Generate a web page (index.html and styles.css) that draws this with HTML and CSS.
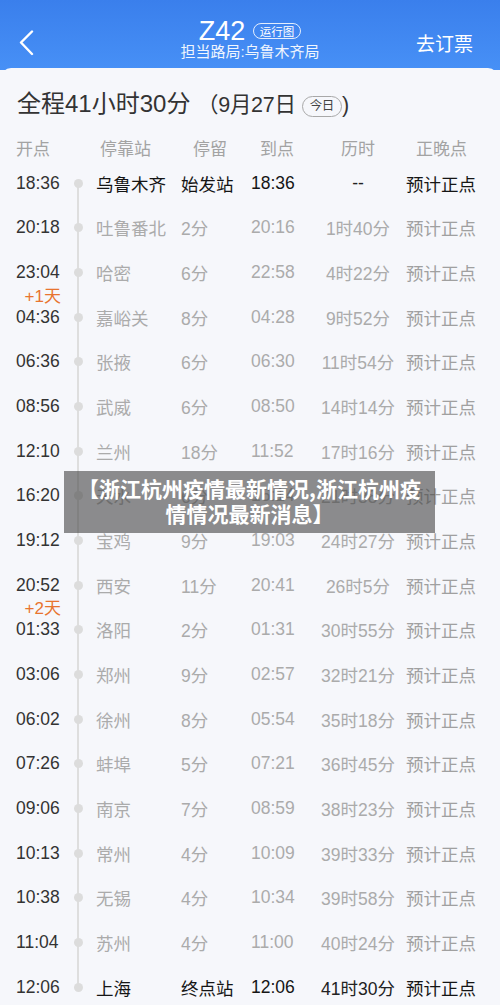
FILE: index.html
```html
<!DOCTYPE html>
<html lang="zh-CN">
<head>
    <meta charset="UTF-8">
    <meta name="viewport" content="width=device-width, initial-scale=1.0">
    <title>Z42 时刻表</title>
    <link rel="stylesheet" href="styles.css">
</head>
<body>
    <div class="topbar">
        <div class="back">
            <svg width="16" height="26" viewBox="0 0 16 26"><polyline points="13,1.5 2,12.5 13,24" fill="none" stroke="#fff" stroke-width="2.4" stroke-linecap="round" stroke-linejoin="round"/></svg>
        </div>
        <div class="title">
            <div class="train">Z42 <span class="chart">运行图</span></div>
            <div class="bureau">担当路局:乌鲁木齐局</div>
        </div>
        <div class="order">去订票</div>
    </div>

    <div class="card">
        <div class="summary">
            全程41小时30分 <span class="date">（9月27日<span class="today">今日</span>)</span>
        </div>

        <div class="grid head">
            <div class="h-time">开点</div>
            <div></div>
            <div class="h-station">停靠站</div>
            <div class="h-stay">停留</div>
            <div class="h-arrive">到点</div>
            <div class="h-dur">历时</div>
            <div class="h-status">正晚点</div>
        </div>

        <div class="timetable">
            <div class="grid row dark first">
                <div class="time">18:36</div><div class="dot"></div>
                <div class="station">乌鲁木齐</div><div class="stay">始发站</div>
                <div class="arrive">18:36</div><div class="dur">--</div><div class="status">预计正点</div>
            </div>
            <div class="grid row">
                <div class="time">20:18</div><div class="dot"></div>
                <div class="station">吐鲁番北</div><div class="stay">2分</div>
                <div class="arrive">20:16</div><div class="dur">1时40分</div><div class="status">预计正点</div>
            </div>
            <div class="grid row">
                <div class="time">23:04</div><div class="dot"></div>
                <div class="station">哈密</div><div class="stay">6分</div>
                <div class="arrive">22:58</div><div class="dur">4时22分</div><div class="status">预计正点</div>
            </div>
            <div class="grid row">
                <div class="time"><span class="plus">+1天</span>04:36</div><div class="dot"></div>
                <div class="station">嘉峪关</div><div class="stay">8分</div>
                <div class="arrive">04:28</div><div class="dur">9时52分</div><div class="status">预计正点</div>
            </div>
            <div class="grid row">
                <div class="time">06:36</div><div class="dot"></div>
                <div class="station">张掖</div><div class="stay">6分</div>
                <div class="arrive">06:30</div><div class="dur">11时54分</div><div class="status">预计正点</div>
            </div>
            <div class="grid row">
                <div class="time">08:56</div><div class="dot"></div>
                <div class="station">武威</div><div class="stay">6分</div>
                <div class="arrive">08:50</div><div class="dur">14时14分</div><div class="status">预计正点</div>
            </div>
            <div class="grid row">
                <div class="time">12:10</div><div class="dot"></div>
                <div class="station">兰州</div><div class="stay">18分</div>
                <div class="arrive">11:52</div><div class="dur">17时16分</div><div class="status">预计正点</div>
            </div>
            <div class="grid row">
                <div class="time">16:20</div><div class="dot"></div>
                <div class="station">天水</div><div class="stay">6分</div>
                <div class="arrive">16:14</div><div class="dur">21时38分</div><div class="status">预计正点</div>
            </div>
            <div class="grid row">
                <div class="time">19:12</div><div class="dot"></div>
                <div class="station">宝鸡</div><div class="stay">9分</div>
                <div class="arrive">19:03</div><div class="dur">24时27分</div><div class="status">预计正点</div>
            </div>
            <div class="grid row">
                <div class="time">20:52</div><div class="dot"></div>
                <div class="station">西安</div><div class="stay">11分</div>
                <div class="arrive">20:41</div><div class="dur">26时5分</div><div class="status">预计正点</div>
            </div>
            <div class="grid row">
                <div class="time"><span class="plus">+2天</span>01:33</div><div class="dot"></div>
                <div class="station">洛阳</div><div class="stay">2分</div>
                <div class="arrive">01:31</div><div class="dur">30时55分</div><div class="status">预计正点</div>
            </div>
            <div class="grid row">
                <div class="time">03:06</div><div class="dot"></div>
                <div class="station">郑州</div><div class="stay">9分</div>
                <div class="arrive">02:57</div><div class="dur">32时21分</div><div class="status">预计正点</div>
            </div>
            <div class="grid row">
                <div class="time">06:02</div><div class="dot"></div>
                <div class="station">徐州</div><div class="stay">8分</div>
                <div class="arrive">05:54</div><div class="dur">35时18分</div><div class="status">预计正点</div>
            </div>
            <div class="grid row">
                <div class="time">07:26</div><div class="dot"></div>
                <div class="station">蚌埠</div><div class="stay">5分</div>
                <div class="arrive">07:21</div><div class="dur">36时45分</div><div class="status">预计正点</div>
            </div>
            <div class="grid row">
                <div class="time">09:06</div><div class="dot"></div>
                <div class="station">南京</div><div class="stay">7分</div>
                <div class="arrive">08:59</div><div class="dur">38时23分</div><div class="status">预计正点</div>
            </div>
            <div class="grid row">
                <div class="time">10:13</div><div class="dot"></div>
                <div class="station">常州</div><div class="stay">4分</div>
                <div class="arrive">10:09</div><div class="dur">39时33分</div><div class="status">预计正点</div>
            </div>
            <div class="grid row">
                <div class="time">10:38</div><div class="dot"></div>
                <div class="station">无锡</div><div class="stay">4分</div>
                <div class="arrive">10:34</div><div class="dur">39时58分</div><div class="status">预计正点</div>
            </div>
            <div class="grid row">
                <div class="time">11:04</div><div class="dot"></div>
                <div class="station">苏州</div><div class="stay">4分</div>
                <div class="arrive">11:00</div><div class="dur">40时24分</div><div class="status">预计正点</div>
            </div>
            <div class="grid row dark last">
                <div class="time">12:06</div><div class="dot"></div>
                <div class="station">上海</div><div class="stay">终点站</div>
                <div class="arrive">12:06</div><div class="dur">41时30分</div><div class="status">预计正点</div>
            </div>
        </div>
    </div>

    <div class="caption">【浙江杭州疫情最新情况,浙江杭州疫情情况最新消息】</div>
</body>
</html>
```

FILE: styles.css
```css
body {
    margin: 0;
    width: 500px;
    height: 1005px;
    overflow: hidden;
    position: relative;
    font-family: "Liberation Sans", "Noto Sans CJK SC", sans-serif;
    background: linear-gradient(180deg, #3a7fec 0%, #4790f6 70px, #f6f7fb 70px);
    color: #333;
}
.topbar {
    height: 68px;
    display: grid;
    grid-template-columns: 1fr auto 1fr;
    color: white;
}
.back {
    padding: 30px 0 0 19px;
}
.title {
    padding-top: 20px;
    text-align: center;
}
.train {
    font-size: 27px;
    line-height: 23px;
}
.chart {
    display: inline-block;
    vertical-align: 4px;
    font-size: 11.5px;
    line-height: 14px;
    padding: 0 6px;
    border: 1px solid rgba(255, 255, 255, 0.85);
    border-radius: 8px;
    font-family: "Noto Sans CJK SC", sans-serif;
}
.bureau {
    font-size: 15px;
    line-height: 18px;
    opacity: 0.92;
}
.order {
    justify-self: end;
    padding: 34px 27px 0 0;
    font-size: 19px;
    line-height: 22px;
}
.card {
    background: #f6f7fb;
    margin: 0 2px 0 1px;
    border-radius: 10px 10px 0 0;
    padding-top: 21px;
}
.summary {
    padding-left: 16px;
    font-size: 24px;
    line-height: 30px;
    color: #333;
    margin-bottom: 19px;
}
.date {
    font-size: 21.5px;
    letter-spacing: -0.3px;
}
.today {
    display: inline-block;
    vertical-align: 2px;
    font-size: 12.5px;
    line-height: 19px;
    padding: 0 7px;
    margin-left: 6px;
    border: 1px solid #a8a8a8;
    border-radius: 11px;
    color: #444;
}
.grid {
    display: grid;
    grid-template-columns: 54px 16px 95px 70px 64px 86px 1fr;
    padding-left: 15px;
}
.head {
    height: 22px;
    line-height: 22px;
    font-size: 17px;
    color: #a3a3a3;
}
.h-station { padding-left: 14px; }
.h-stay { padding-left: 12px; }
.h-arrive { padding-left: 9px; }
.h-dur { text-align: center; }
.h-status { padding-left: 15px; }
.row {
    height: 44.67px;
    align-items: center;
    font-size: 17.5px;
    color: #ababab;
}
.time {
    position: relative;
    color: #333;
}
.plus {
    position: absolute;
    right: 9px;
    top: -25px;
    font-size: 17px;
    color: #e8742f;
}
.dot {
    position: relative;
    align-self: stretch;
}
.dot::before {
    content: "";
    position: absolute;
    left: 7px;
    top: 0;
    bottom: 0;
    width: 2px;
    background: #dedede;
}
.first .dot::before { top: 50%; }
.last .dot::before { bottom: 50%; }
.dot::after {
    content: "";
    position: absolute;
    left: 3.5px;
    top: 50%;
    width: 9px;
    height: 9px;
    margin-top: -4.5px;
    border-radius: 50%;
    background: #dcdcdc;
}
.station { padding-left: 10px; }
.dur { text-align: center; }
.status { padding-left: 5px; color: #a0a0a0; }
.dark .station,
.dark .stay,
.dark .arrive,
.dark .status { color: #151515; }
.dark .dur { color: #222; }
.caption {
    position: absolute;
    left: 64px;
    top: 471px;
    width: 371px;
    height: 62px;
    box-sizing: border-box;
    padding: 5px 6px;
    background: rgba(72, 72, 72, 0.62);
    color: white;
    font-weight: bold;
    font-size: 21px;
    line-height: 25px;
    text-align: center;
    font-family: "Noto Sans CJK SC", sans-serif;
}
```
